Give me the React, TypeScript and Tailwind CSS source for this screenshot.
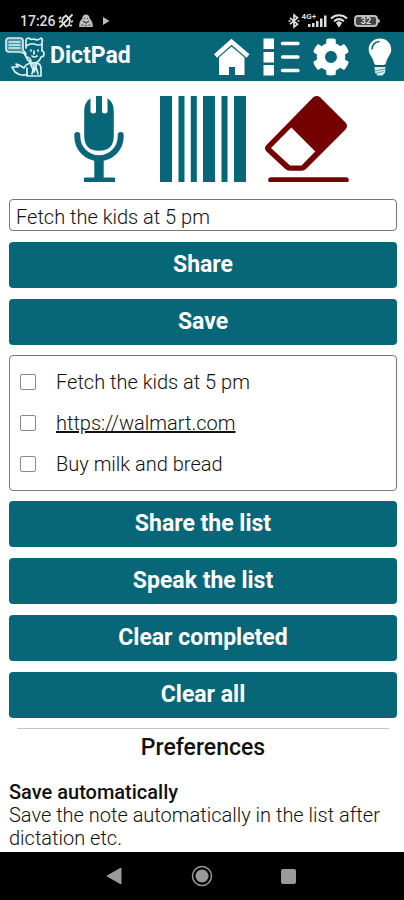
import React from 'react';
import { FaCog } from 'react-icons/fa';

const notes = [
  { id: 'note-1', text: 'Fetch the kids at 5 pm' },
  { id: 'note-2', text: 'https://walmart.com', href: 'https://walmart.com' },
  { id: 'note-3', text: 'Buy milk and bread' },
];

const StatusBar = () => (
  <div className="flex h-8 shrink-0 items-end justify-between bg-black pr-6 pb-[3px] pl-5 text-[#dedede]">
    <div className="flex items-center">
      <span className="text-sm leading-4 font-medium">17:26</span>
      {/* Vibrate off */}
      <svg className="ml-0.5 h-4 w-4" viewBox="0 0 16 16" fill="none" stroke="currentColor" strokeWidth="1.800">
        <path d="M5 5l3-2.500 4 4.500-1 5-3 1.500-4-4.500z" />
        <path d="M1.500 14.500L14.500 1.500M1 6l2-2M1 9l2-1M13 9l2-1M12 13l2-1" />
      </svg>
      <svg className="ml-1 h-4 w-4" viewBox="0 0 16 16">
        <path d="M8 1.500c2.500 0 3.600 1.700 3.800 4.300C14 7.500 15 10 14.800 14H1.200C1 10 2 7.500 4.200 5.800 4.400 3.200 5.500 1.500 8 1.500z" fill="#bdbdbd" />
        <path d="M6 5.500h1M9 5.500h1M5 8l3 2 3-2M3.500 12h2M7 12.500h2M10.500 12h2" stroke="#444" strokeWidth="1.200" fill="none" />
      </svg>
      <svg className="ml-2 h-4 w-2" viewBox="0 0 8 16">
        <path d="M1 4l6.500 4L1 12z" fill="#bdbdbd" />
      </svg>
    </div>
    <div className="flex items-center">
      <svg className="h-4 w-3" viewBox="0 0 12 16" fill="none" stroke="currentColor" strokeWidth="1.700">
        <path d="M2 4.800l7.500 6.400L6 14V2l3.500 2.800L2 11.200" />
        <path d="M.5 8h2M9.500 8h2" />
      </svg>
      <div className="ml-0.5 flex h-4 items-end">
        <span className="self-start text-[8px] leading-2 font-bold">4G+</span>
        <svg className="-ml-2 h-4 w-5" viewBox="0 0 20 16" fill="currentColor">
          <path d="M0 11h2.500v3H0zM4 10h2.500v4H4zM8 8h2.500v6H8zM12 5.500h2.500V14H12zM16 2.500h2.500V14H16z" />
        </svg>
      </div>
      <svg className="ml-0.5 h-4 w-[18px]" viewBox="0 0 18 16" fill="none" stroke="currentColor">
        <path d="M1 5.500C5.500 1.300 12.500 1.300 17 5.500M4 8.200c3-2.500 7-2.500 10 0" strokeWidth="2" />
        <path d="M6.500 9.800c1.500-1.300 3.500-1.300 5 0L9 14z" fill="currentColor" />
      </svg>
      <div className="ml-1.5 flex items-center">
        <span className="flex h-3 w-6 items-center justify-center rounded border-2 border-[#bdbdbd] bg-[#444] text-[9px] leading-2 font-bold">32</span>
        <span className="h-1 w-0.5 rounded-r bg-[#bdbdbd]" />
      </div>
    </div>
  </div>
);

const Logo = () => (
  <svg className="h-12 w-12" viewBox="0 0 48 48" fill="none" stroke="#d9f0f3" strokeWidth="1.700" strokeLinejoin="round" strokeLinecap="round">
    {/* Speech bubble */}
    <path d="M7 5h11q3 0 3 3v9l3 4-6-2H7q-3 0-3-3V8q0-3 3-3z" fill="#4795a3" />
    <path d="M7 9h11M7 12h11M7 15h11" strokeWidth="1.400" />
    {/* Hair and face */}
    <path d="M24 15V8q0-3 3-3 1 2 5 1 4 2 7-1 2 1 1 4v9q2 0 2 3t-3 3q-2 6-7 6-6 0-8-7-2-1-1-4" />
    <path d="M24 13q5-3 8-2 5 2 8 0" />
    <path d="M29 17v1M36 17v1M32 18v3M30 23q2 2 5 0M24 24q4 0 5 4" />
    {/* Shoulders, tie and raised hand */}
    <path d="M28 30q-5 2-6 5l-5-3q-3-1-3-1l2 3-6 0 3 5q5 4 10 3l2-1v2h14v-7q0-5-4-6z" />
    <path d="M28 30l4 9 3-9M29 32h5M32 33l-2 8M34 34l2 7M25 35v7" />
  </svg>
);

const HomeIcon = () => (
  <svg className="size-[38px]" viewBox="0 0 38 38" fill="white">
    <path d="M3.500 18L19.500 3.800 36 18" fill="none" stroke="white" strokeWidth="4.500" />
    <path d="M7 19.500L19.500 8.500 32.500 19.500V37H23v-8h-6v8H7z" />
  </svg>
);

const ListIcon = () => (
  <svg className="size-[38px]" viewBox="0 0 38 38" fill="white">
    <path d="M1.500 0.500h10.500v10.500H1.500zM1.500 14h10.500v10.500H1.500zM1.500 27h10.500v10.500H1.500z" />
    <path d="M20.500 5.500H36M20.500 19H36M20.500 32.500H36" stroke="white" strokeWidth="3.400" strokeLinecap="round" />
  </svg>
);

const BulbIcon = () => (
  <svg className="size-[38px]" viewBox="0 0 38 38">
    <path d="M18 0.500c6.500 0 11.200 4.700 11.200 11 0 5.500-4.200 7.500-5.200 13.500q-.3 2-2.500 2h-7q-2.200 0-2.500-2C11 19 6.700 17 6.700 11.500c0-6.300 4.800-11 11.300-11z" fill="white" />
    <path d="M10 11q.5-6.500 7-7.500" fill="none" stroke="#086679" strokeWidth="1.500" strokeLinecap="round" />
    <path d="M12.500 29h11l-.5 5.500-2.500 3h-5L13 34.500z" fill="#d9edf0" />
    <path d="M13 33l10-2M14 35.500l8-2" stroke="#62a5b0" strokeWidth="1" />
  </svg>
);

const MicIcon = () => (
  <svg className="size-[86px]" viewBox="0 0 86 86" fill="#086679">
    <path d="M34.500 2.200V15q0 2.500 2.800 2.500T40 15V0h6v15q0 2.500 2.800 2.500t2.700-2.500V2.200Q57.800 6.500 57.800 15v25q0 14.700-14.800 14.700T28.200 40V15q0-8.500 6.300-12.800z" />
    <path d="M21.300 39v1.500a21.700 21.700 0 0 0 43.400 0V39" fill="none" stroke="#086679" strokeWidth="6" strokeLinecap="round" />
    <path d="M38.300 62h9.400v19.500H58q1 0 1 1V86H28v-3.500q0-1 1-1h9.300z" />
  </svg>
);

const BarcodeIcon = () => (
  <svg className="size-[86px]" viewBox="0 0 86 86" fill="#086679">
    <path d="M0 0h12v86H0zM18.500 0h6v86h-6zM30.800 0h6v86h-6zM43 0h12v86H43zM61.500 0h6v86h-6zM74 0h12v86H74z" />
  </svg>
);

const EraserIcon = () => (
  <svg className="size-[86px]" viewBox="0 0 86 86" fill="#750000">
    <path d="M49.500 1q3.200-2 6.400 0L82 27q2 3 0 6L42.500 72.500q-2.200 2.300-5 2.300H26q-3 0-5.200-2.300L2.500 55.500q-3-3.300 0-6.500z" />
    <path d="M27.300 31.500L51.300 55.500 37.500 69.500H26L7 52z" fill="white" />
    <path d="M7 84h75" stroke="#750000" strokeWidth="5.500" strokeLinecap="round" />
  </svg>
);

const ActionButton = ({ children }: { children: React.ReactNode }) => (
  <button type="button" className="h-[46px] w-full rounded bg-[#086679] text-[23px] font-bold text-white">
    {children}
  </button>
);

const App = () => {
  return (
    <div className="flex h-screen flex-col overflow-hidden bg-white font-[Roboto,sans-serif] text-[#111]">
      <StatusBar />

      <header className="flex h-[49px] shrink-0 items-center justify-between bg-[#086679] pr-1 pl-0.5 text-white">
        <div className="flex items-center">
          <Logo />
          <h1 className="text-[23px] font-bold">DictPad</h1>
        </div>
        <nav className="flex gap-3">
          <button type="button" aria-label="Home"><HomeIcon /></button>
          <button type="button" aria-label="List"><ListIcon /></button>
          <button type="button" aria-label="Settings"><FaCog size={38} /></button>
          <button type="button" aria-label="Tips"><BulbIcon /></button>
        </nav>
      </header>

      <main className="min-h-0 flex-1 overflow-hidden pt-[15px] pr-[7px] pl-[9px]">
        <div className="flex justify-center gap-[18px]">
          <button type="button" aria-label="Dictate"><MicIcon /></button>
          <button type="button" aria-label="Scan barcode"><BarcodeIcon /></button>
          <button type="button" aria-label="Erase"><EraserIcon /></button>
        </div>

        <input
          type="text"
          aria-label="Note"
          defaultValue="Fetch the kids at 5 pm"
          className="mt-[17px] block h-8 w-full rounded border border-[#777] px-1.5 pt-1 text-xl font-light outline-none"
        />

        <div className="mt-[11px] flex flex-col gap-[11px]">
          <ActionButton>Share</ActionButton>
          <ActionButton>Save</ActionButton>
        </div>

        <ul className="mt-2.5 flex h-[136px] flex-col justify-center rounded border border-[#777] px-2.5">
          {notes.map((note) => (
            <li key={note.id} className="flex h-[41px] items-center gap-5">
              <input
                type="checkbox"
                id={note.id}
                aria-label={note.text}
                className="size-4 appearance-none rounded-xs border border-[#888] bg-white"
              />
              {note.href ? (
                <a href={note.href} className="text-xl font-light underline">{note.text}</a>
              ) : (
                <label htmlFor={note.id} className="text-xl font-light">{note.text}</label>
              )}
            </li>
          ))}
        </ul>

        <div className="mt-2.5 flex flex-col gap-[11px]">
          <ActionButton>Share the list</ActionButton>
          <ActionButton>Speak the list</ActionButton>
          <ActionButton>Clear completed</ActionButton>
          <ActionButton>Clear all</ActionButton>
        </div>

        <hr className="mx-2 mt-2.5 border-[#c4c4c4]" />
        <h2 className="mt-1 text-center text-[23px] leading-[30px] font-medium">Preferences</h2>

        <section className="mt-[18px]">
          <h3 className="text-xl leading-[23px] font-medium">Save automatically</h3>
          <p className="text-xl leading-[23px] font-light">Save the note automatically in the list after dictation etc.</p>
        </section>
      </main>

      <footer className="flex h-12 shrink-0 items-center justify-center gap-[65px] bg-black">
        <button type="button" aria-label="Back">
          <svg className="size-[22px]" viewBox="0 0 22 22">
            <path d="M17 3v16L3 11z" fill="#9a9a9a" stroke="#9a9a9a" strokeLinejoin="round" />
          </svg>
        </button>
        <button type="button" aria-label="Home screen">
          <svg className="size-[22px]" viewBox="0 0 22 22">
            <circle cx="11" cy="11" r="9.500" fill="none" stroke="#9a9a9a" strokeWidth="1.500" />
            <circle cx="11" cy="11" r="6.500" fill="#9a9a9a" />
          </svg>
        </button>
        <button type="button" aria-label="Recent apps">
          <svg className="size-[22px]" viewBox="0 0 22 22">
            <rect x="3" y="4" width="15" height="15" rx="2" fill="#9a9a9a" />
          </svg>
        </button>
      </footer>
    </div>
  );
};

export default App;
